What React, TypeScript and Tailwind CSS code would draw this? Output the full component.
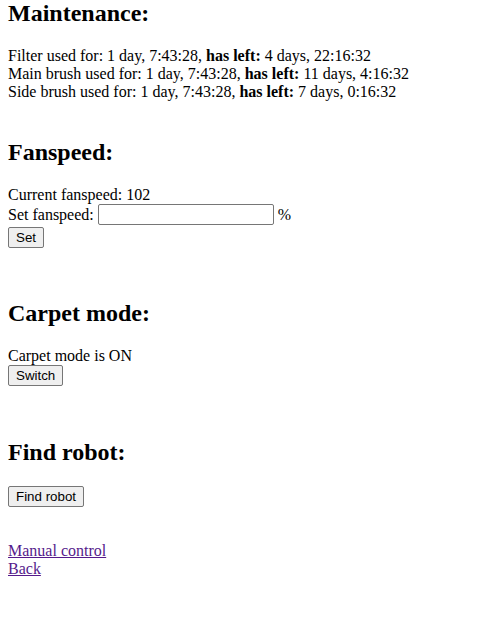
export default function App() {
  const btn =
    "block h-[21px] rounded-[2px] border border-[#767676] bg-[#efefef] px-[7px] font-['Liberation_Sans',Arial,sans-serif] text-[13.33px] leading-[normal] text-black";

  return (
    <div className="px-[8px] font-['Liberation_Serif','Times_New_Roman',serif] text-[16px] leading-[normal] text-black">
      <h2 className="mb-[20px] text-[24px] font-bold">Maintenance:</h2>
      <div>
        Filter used for: 1 day, 7:43:28, <b>has left:</b> 4 days, 22:16:32
        <br />
        Main brush used for: 1 day, 7:43:28, <b>has left:</b> 11 days, 4:16:32
        <br />
        Side brush used for: 1 day, 7:43:28, <b>has left:</b> 7 days, 0:16:32
      </div>

      <h2 className="mt-[38px] mb-[20px] text-[24px] font-bold">Fanspeed:</h2>
      <div>Current fanspeed: 102</div>
      <div className="flex h-[21px] items-center">
        <span>Set fanspeed:</span>
        <input
          type="text"
          className="ml-[4px] h-[21px] w-[176px] rounded-[2px] border border-[#767676] bg-white px-[2px] font-['Liberation_Sans',Arial,sans-serif] text-[13.33px]"
        />
        <span className="ml-[4px]">%</span>
      </div>
      <button className={btn + " mt-[2px]"}>Set</button>

      <h2 className="mt-[52px] mb-[20px] text-[24px] font-bold">Carpet mode:</h2>
      <div>Carpet mode is ON</div>
      <button className={btn}>Switch</button>

      <h2 className="mt-[53px] mb-[20px] text-[24px] font-bold">Find robot:</h2>
      <button className={btn}>Find robot</button>

      <div className="mt-[35px]">
        <a href="#" className="text-[#551a8b] underline">
          Manual control
        </a>
        <br />
        <a href="#" className="text-[#551a8b] underline">
          Back
        </a>
      </div>
    </div>
  );
}
